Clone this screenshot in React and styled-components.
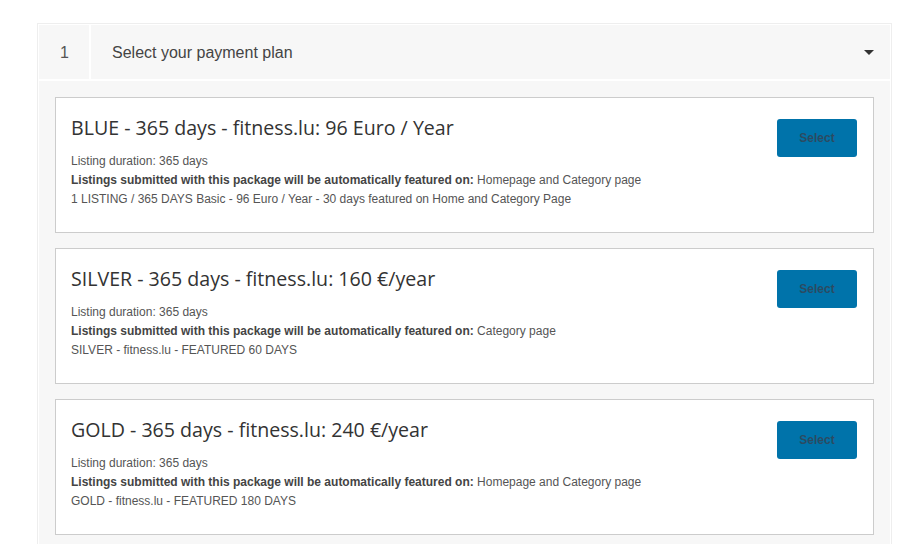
import styled, { createGlobalStyle } from "styled-components";

const GlobalStyle = createGlobalStyle`
    body {
        margin: 0;
        background: #ffffff;
        font-family: "Liberation Sans", Arial, sans-serif;
        color: #444444;
    }
`;

const plans = [
    {
        title: "BLUE - 365 days - fitness.lu: 96 Euro / Year",
        featured: "Homepage and Category page",
        description: "1 LISTING / 365 DAYS Basic - 96 Euro / Year - 30 days featured on Home and Category Page",
    },
    {
        title: "SILVER - 365 days - fitness.lu: 160 €/year",
        featured: "Category page",
        description: "SILVER - fitness.lu - FEATURED 60 DAYS",
    },
    {
        title: "GOLD - 365 days - fitness.lu: 240 €/year",
        featured: "Homepage and Category page",
        description: "GOLD - fitness.lu - FEATURED 180 DAYS",
    },
];

const Caret = () => (
    <svg width="10" height="6" viewBox="0 0 10 6">
        <path d="M0 0 L10 0 L5 5 Z" fill="#333333" />
    </svg>
);

const PlanCard = ({ plan }) => (
    <Card>
        <Info>
            <PlanTitle>{plan.title}</PlanTitle>
            <Line>Listing duration: 365 days</Line>
            <Line>
                <strong>Listings submitted with this package will be automatically featured on:</strong> {plan.featured}
            </Line>
            <Line>{plan.description}</Line>
        </Info>
        <SelectButton>Select</SelectButton>
    </Card>
);

export default function App() {
    return (
        <>
            <GlobalStyle />
            <Wrapper>
                <Step>
                    <Header>
                        <StepNumber>1</StepNumber>
                        <StepTitle>
                            <span>Select your payment plan</span>
                            <Caret />
                        </StepTitle>
                    </Header>
                    <Body>
                        {plans.map((plan) => (
                            <PlanCard key={plan.title} plan={plan} />
                        ))}
                    </Body>
                </Step>
            </Wrapper>
        </>
    );
}

const Wrapper = styled.div`
    padding: 23px 0 0 37px;
    height: 544px;
    box-sizing: border-box;
    overflow: hidden;
`;
const Step = styled.section`
    width: 855px;
    box-sizing: border-box;
    border: 1px solid #eeeeee;
    border-bottom: none;
    padding: 1px 1px 0 1px;
`;
const Header = styled.div`
    display: flex;
    gap: 2px;
    height: 54px;
`;
const StepNumber = styled.div`
    width: 50px;
    background: #f7f7f7;
    display: flex;
    align-items: center;
    padding: 2px 0 0 21px;
    box-sizing: border-box;
    font-size: 16px;
    color: #555555;
`;
const StepTitle = styled.div`
    flex: 1;
    background: #f7f7f7;
    display: flex;
    align-items: center;
    justify-content: space-between;
    padding: 2px 16px 0 21px;
    font-size: 16px;
    color: #444444;
`;
const Body = styled.div`
    margin-top: 2px;
    background: #f7f7f7;
    padding: 16px;
    display: flex;
    flex-direction: column;
    gap: 15px;
`;
const Card = styled.div`
    display: flex;
    justify-content: space-between;
    align-items: flex-start;
    height: 136px;
    box-sizing: border-box;
    background: #ffffff;
    border: 1px solid #cccccc;
    padding: 19px 16px 0 15px;
`;
const Info = styled.div`
    display: flex;
    flex-direction: column;
`;
const PlanTitle = styled.h3`
    margin: 0 0 13px 0;
    font-family: "Open Sans", sans-serif;
    font-weight: 400;
    font-size: 19.6px;
    line-height: 22px;
    color: #333333;
`;
const Line = styled.p`
    margin: 0;
    font-size: 12px;
    line-height: 19px;
    color: #555555;

    strong {
        color: #444444;
    }
`;
const SelectButton = styled.button`
    margin-top: 2px;
    width: 80px;
    height: 38px;
    border: none;
    border-radius: 3px;
    background: #0073aa;
    color: #2b4b62;
    font-family: "Liberation Sans", Arial, sans-serif;
    font-weight: 700;
    font-size: 12px;
    flex-shrink: 0;
`;
